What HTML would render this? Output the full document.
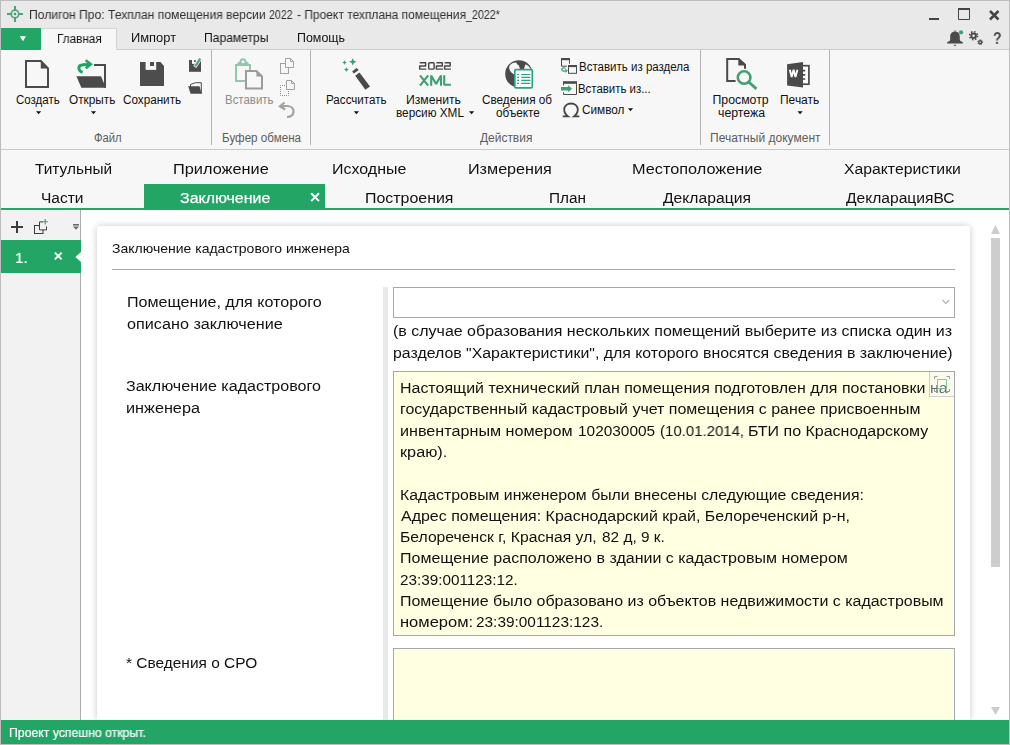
<!DOCTYPE html>
<html lang="ru"><head><meta charset="utf-8"><title>Полигон Про</title>
<style>
html,body{margin:0;padding:0}
body{width:1010px;height:745px;overflow:hidden;position:relative;background:#e8e8e8;font-family:"Liberation Sans",sans-serif;}
.t{position:absolute;white-space:pre;transform-origin:0 50%;display:block}
.a{position:absolute}
svg{position:absolute;overflow:visible}
.g{will-change:transform}

</style></head>
<body>
<!-- window frame -->
<div class="a" style="left:0;top:0;width:1010px;height:745px;background:#bdbdbd"></div>
<div class="a" style="left:1px;top:1px;width:1008px;height:743px;background:#e9e9e9"></div>
<!-- ribbon body -->
<div class="a" style="left:1px;top:50px;width:1008px;height:99px;background:#f7f7f7"></div>
<div class="a" style="left:1px;top:149px;width:1008px;height:1px;background:#c9c9c9"></div>
<div class="a" style="left:1px;top:49px;width:1008px;height:1px;background:#cbcbcb"></div>
<!-- app button -->
<div class="a" style="left:1px;top:28px;width:40px;height:22px;background:#23a566"></div>
<svg style="left:19px;top:36px" width="8" height="6" viewBox="0 0 8 6"><path d="M0.8 0.3h6.2L3.900 5.200z" fill="#fff"/></svg>
<!-- active ribbon tab -->
<div class="a" style="left:41px;top:28px;width:76px;height:22px;background:#f7f7f7;border-top:1px solid #d4d4d4;border-right:1px solid #d4d4d4;box-sizing:border-box"></div>
<!-- ribbon separators -->
<div class="a" style="left:211px;top:50px;width:1px;height:95px;background:#b4b4b4"></div>
<div class="a" style="left:310px;top:50px;width:1px;height:95px;background:#b4b4b4"></div>
<div class="a" style="left:700px;top:50px;width:1px;height:95px;background:#b4b4b4"></div>
<div class="a" style="left:829px;top:50px;width:1px;height:95px;background:#b4b4b4"></div>
<!-- section tabs area -->
<div class="a" style="left:1px;top:150px;width:1008px;height:58px;background:#f7f7f7"></div>
<div class="a" style="left:144px;top:184px;width:181px;height:24px;background:#23a566"></div>
<div class="a" style="left:1px;top:208px;width:1008px;height:2px;background:#23a566"></div>
<!-- content bg -->
<div class="a" style="left:81px;top:210px;width:928px;height:510px;background:#ffffff"></div>
<!-- sidebar -->
<div class="a" style="left:1px;top:210px;width:79px;height:510px;background:#f2f2f2"></div>
<div class="a" style="left:80px;top:210px;width:1px;height:510px;background:#adadad"></div>
<div class="a" style="left:1px;top:240px;width:80px;height:33px;background:#23a566"></div>
<svg style="left:75px;top:252px" width="6" height="10" viewBox="0 0 6 10"><path d="M6 0L0.300 5l5.700 5z" fill="#ffffff"/></svg>
<!-- card -->
<div class="a" style="left:97px;top:226px;width:873px;height:494px;background:#fff;border-radius:3px 3px 0 0;box-shadow:0 0 7px rgba(0,0,0,.22)"></div>
<div class="a" style="left:112px;top:269px;width:843px;height:1px;background:#a9a9b3"></div>
<!-- splitter -->
<div class="a" style="left:383px;top:287px;width:5px;height:433px;background:#e9e9e9"></div>
<!-- combo -->
<div class="a" style="left:393px;top:287px;width:562px;height:31px;background:#fff;border:1px solid #a6a6b0;box-sizing:border-box"></div>
<svg style="left:941px;top:299px" width="9" height="6" viewBox="0 0 9 6"><path d="M1.4 1l3.400 3.400L8.200 1" fill="none" stroke="#adadb5" stroke-width="1.100"/></svg>
<!-- textareas -->
<div class="a" style="left:393px;top:371px;width:562px;height:265px;background:#ffffe1;border:1px solid #a6a6b0;box-sizing:border-box"></div>
<div class="a" style="left:393px;top:648px;width:562px;height:80px;background:#ffffe1;border:1px solid #a6a6b0;box-sizing:border-box"></div>
<!-- scrollbar -->
<div class="a" style="left:991px;top:238px;width:9px;height:329px;background:#cdcdcd"></div>
<svg style="left:991px;top:225px" width="9" height="9" viewBox="0 0 9 9"><path d="M4.5 0L9 9H0z" fill="#cdcdcd"/></svg>
<svg style="left:991px;top:707px" width="9" height="8" viewBox="0 0 9 8"><path d="M0 0h9L4.5 8z" fill="#cdcdcd"/></svg>
<!-- status bar -->
<div class="a" style="left:1px;top:720px;width:1008px;height:24px;background:#23a566"></div>
<!-- ===== ICONS ===== -->
<svg style="left:0;top:0" width="1010" height="150" viewBox="0 0 1010 150">
<!-- logo -->
<g stroke="#4ea37b" fill="none">
 <circle cx="15" cy="14" r="3.8" stroke-width="1.7"/>
 <path d="M15 6v4.2M15 17.8v4.2M7 14h4.2M18.8 14h4.2" stroke-width="2"/>
</g>
<circle cx="15" cy="14" r="1.3" fill="#3d9a6c"/>
<!-- window controls -->
<rect x="929" y="18" width="10" height="2" fill="#444"/>
<path d="M958.5 9v10.5h11V9z" fill="none" stroke="#444" stroke-width="1"/>
<rect x="958" y="8" width="12" height="2" fill="#444"/>
<path d="M990 11l8.5 8.5M998.5 11l-8.5 8.5" stroke="#444" stroke-width="2.5" fill="none"/>
<!-- bell -->
<path d="M955 31.600c-3 0-4.800 2.200-4.800 5.200v2.600c0 1.200-.8 2-3 2.600v1.600h15.600v-1.600c-2.200-.6-3-1.400-3-2.600v-2.600c0-3-1.800-5.200-4.800-5.200z" fill="#4a4a4a"/>
<rect x="954.200" y="30.300" width="1.600" height="1.500" fill="#8a8a8a"/>
<rect x="953.900" y="44.800" width="2.200" height="1" fill="#4a4a4a"/>
<circle cx="961" cy="32.300" r="2.100" fill="#3aa46f"/>
<!-- gears -->
<g fill="none" stroke="#4a4a4a">
<circle cx="973.600" cy="35.700" r="2.300" stroke-width="2"/>
<circle cx="973.600" cy="35.700" r="4" stroke-width="1.500" stroke-dasharray="1.570 1.570"/>
<circle cx="980.200" cy="42.200" r="1.500" stroke-width="1.400"/>
<circle cx="980.200" cy="42.200" r="2.500" stroke-width=".9" stroke-dasharray=".98 .98"/>
</g>
<!-- NEW doc -->
<path d="M26 61h14.800l7.200 7.500V87H26z" fill="none" stroke="#4a4a4a" stroke-width="2"/>
<path d="M40.800 60.200v8.300H48.800z" fill="#4a4a4a"/>
<!-- OPEN folder -->
<path d="M76.400 76.200H101l4.900 11.500H81.400z" fill="#4a4a4a"/>
<path d="M94 65h11v22.700" fill="none" stroke="#4a4a4a" stroke-width="2"/>
<path d="M82.600 72.400C78 71 78.200 66.600 80.500 65.400 82.500 64.400 85 64.500 89.500 64.400" fill="none" stroke="#1fa463" stroke-width="2.900"/>
<path d="M85.700 60.300l5.100 4-5.100 4" fill="none" stroke="#1fa463" stroke-width="2.600"/>
<!-- SAVE -->
<path d="M140 62h20.500l3.500 4.100V86H140z" fill="#4d4d4d"/>
<rect x="145.600" y="61" width="10.600" height="8.900" fill="#f7f7f7"/>
<rect x="150" y="62" width="4" height="4" fill="#4d4d4d"/>
<!-- save-as small -->
<rect x="189" y="60" width="12" height="11.800" fill="#4d4d4d"/>
<rect x="192" y="59" width="5.300" height="4.900" fill="#f7f7f7"/>
<rect x="194.100" y="60.200" width="1.800" height="1.700" fill="#4d4d4d"/>
<path d="M200.600 58l-5.800 9" stroke="#f7f7f7" stroke-width="3.600"/>
<path d="M200.200 58.700l-5 7.700" stroke="#4aa57b" stroke-width="2.200"/>
<!-- small folder -->
<path d="M190.500 87V84.400L195.600 82.700H201.300V93.500" fill="#f7f7f7" stroke="#4a4a4a" stroke-width="1"/>
<path d="M188.200 86.300H199.500L201.800 93.800H190.600z" fill="#4a4a4a"/>
<!-- PASTE (disabled) -->
<rect x="236" y="65" width="14" height="16" fill="none" stroke="#93c7ae" stroke-width="2"/>
<path d="M238 65v-2.500h10V65" fill="#93c7ae" stroke="#93c7ae" stroke-width="1"/>
<circle cx="243" cy="61.800" r="2.500" fill="#f7f7f7" stroke="#93c7ae" stroke-width="2"/>
<path d="M246 71h10.400l5.600 5.500V88.600H246z" fill="#f7f7f7" stroke="#9c9c9c" stroke-width="2"/>
<path d="M256.400 70v6.500H263z" fill="#9c9c9c"/>
<!-- copy (disabled) -->
<g fill="#f7f7f7" stroke="#a2a2a2" stroke-width="1">
<rect x="280.500" y="63.500" width="8" height="10"/>
<path d="M285.500 58.500h5l3 3v6h-8z"/>
<path d="M290.500 58.500v3h3" fill="none"/>
<rect x="280.500" y="85.500" width="8" height="10" stroke-dasharray="1 1" stroke-dashoffset=".5" stroke="#8e8e8e"/>
<path d="M286.500 80.500h5l3 3v6h-8z"/>
<path d="M291.500 80.500v3h3" fill="none"/>
</g>
<!-- undo -->
<path d="M287 117c5 0 6.500-3 6.500-5.500 0-3.500-3-5.500-6.500-5.500h-5" fill="none" stroke="#a2a2a2" stroke-width="2.200"/>
<path d="M284.500 102.500l-4.500 3.800 5.200 3.200" fill="none" stroke="#a2a2a2" stroke-width="2.200"/>
<!-- WAND -->
<path d="M359.500 72.500L355.200 75.800 365.400 89.700 370 86.500z" fill="#4a4a4a"/>
<path d="M356.500 68.100L352.100 71.500 353.900 73.600 358.700 70.100z" fill="#4a4a4a"/>
<g fill="#3f9f72">
<path d="M352.80 58.00L353.95 60.65L356.60 61.80L353.95 62.95L352.80 65.60L351.65 62.95L349.00 61.80L351.65 60.65z"/><path d="M344.50 60.30L345.25 61.85L346.80 62.60L345.25 63.35L344.50 64.90L343.75 63.35L342.20 62.60L343.75 61.85z"/><path d="M346.40 67.20L347.20 68.80L348.80 69.60L347.20 70.40L346.40 72.00L345.60 70.40L344.00 69.60L345.60 68.80z"/>
</g>
<!-- 2022 XML -->
<g fill="none" stroke="#484848" stroke-width="1.450" stroke-linejoin="round">
<path d="M419.7 62.700H425.6V65.900H419.7V69.100H426.3"/><rect x="428.700" y="62.700" width="5.400" height="6.400" rx=".8"/><path d="M436.4 62.700H442.3V65.900H436.4V69.100H443.0"/><path d="M444.6 62.700H450.2V65.900H444.6V69.100H450.9"/>
</g>
<g fill="none" stroke="#3f9f72" stroke-width="2.100" stroke-linejoin="bevel">
<path d="M420 75.300l8.200 10.400M428.200 75.300l-8.200 10.400"/>
<path d="M431.200 85.700V75.600l4.900 8.400 4.900-8.400v10.100"/>
<path d="M444.200 75.300v9.400h6.700"/>
</g>
<!-- GLOBE -->
<circle cx="518.900" cy="73.900" r="13.700" fill="#4a4a4a"/>
<path transform="translate(51.6 6.9) scale(.9)" d="M516.200 61.800c.6 1.200 1 2 2 2.600 1.200.7 1.300 1.500 1.600 2.600.2.700.700 1.300.600 2.200l.1 6h-6c-1.800-1-3.600-2-4.700-3.800-.9-1.500-1.700-3.200-1.300-5 .4-1.700 2.500-3.300 4.200-4 1.200-.5 2.300-.8 3.500-.6z" fill="#f7f7f7"/>
<path d="M525.600 64.300c1.800 1 3.600 2.300 5 4.500l.5 1.500h-7.300c.3-2 .8-4 1.800-6z" fill="#f7f7f7"/>
<rect x="514.800" y="69.600" width="17.500" height="18.300" rx="1.200" fill="#fbfdfc" stroke="#2ba57c" stroke-width="1.700"/>
<g stroke="#2ba57c" stroke-width="1.200">
<path d="M517.100 74.500h2M521.200 74.500h9.200M517.100 77.400h2M521.200 77.400h9.200M517.100 80.400h2M521.200 80.400h9.200M517.100 83.300h2M521.200 83.300h9.200"/>
</g>
<!-- insert from section -->
<path d="M561.500 59v7.200h5.500M569.500 59v4.700" fill="none" stroke="#4a4a4a" stroke-width="1"/>
<rect x="561" y="58" width="9" height="2.200" fill="#4a4a4a"/>
<rect x="568.500" y="65.500" width="8" height="7.800" fill="#f7f7f7" stroke="#4a4a4a" stroke-width="1"/>
<rect x="568" y="65" width="9" height="2.100" fill="#4a4a4a"/>
<path d="M565.300 68.200c-2.300-.8-3.500 0-3.500 1.200s1.200 1.700 3 1.700h1" fill="none" stroke="#4fa47c" stroke-width="1.300"/>
<path d="M565.300 68.300l2.600 2.400-2.800 2.300z" fill="#4fa47c"/>
<!-- insert from... -->
<path d="M563.500 82v3.300M563.500 92.300v2.200H576.500V82" fill="none" stroke="#4a4a4a" stroke-width="1"/>
<rect x="563" y="81.200" width="14" height="2.600" fill="#4a4a4a"/>
<path d="M561 87.100h7.100v-1.800l3.900 3.500-3.900 3.400v-1.600H561z" fill="#3f9e72"/>
<!-- omega -->
<path d="M562.700 116.400H568C565.500 114.500 564.200 112 564.200 109.500 564.200 106 567.200 103.500 571 103.500S577.800 106 577.800 109.500C577.800 112 576.500 114.500 574 116.400H579.300" fill="none" stroke="#464646" stroke-width="1.800"/>
<!-- PREVIEW -->
<path d="M745 68.800V64.700L738.800 59H727.200V81H735.600" fill="none" stroke="#4a4a4a" stroke-width="2"/>
<path d="M738.300 58.600V65.600H745.800z" fill="#4a4a4a"/>
<circle cx="744.100" cy="77.500" r="6.300" fill="#f7f7f7" stroke="#459d72" stroke-width="2.600"/>
<path d="M748.800 82l7.600 6.900" stroke="#459d72" stroke-width="2.800"/>
<!-- WORD -->
<rect x="802" y="65.700" width="6.900" height="18.500" fill="#fbfbfb" stroke="#4a4a4a" stroke-width="1.700"/>
<path d="M803 70.700h2.200M803 74.800h2.200M803 79h2.200" stroke="#4a4a4a" stroke-width="1.700"/>
<path d="M787.100 64.200L803 62V87.600L787.100 85.500z" fill="#4a4a4a"/>
<path d="M789.800 69.800l1.900 7.200 1.900-7.200 1.900 7.200 1.900-7.200" fill="none" stroke="#fff" stroke-width="1.900" stroke-linejoin="bevel"/>
<!-- dropdown arrows -->
<g fill="#151515">
<path d="M36.0 111.2h5.2l-2.600 3z"/>
<path d="M90.9 111.2h5.2l-2.600 3z"/>
<path d="M353.8 111.2h5.2l-2.600 3z"/>
<path d="M469.0 111.2h5.2l-2.600 3z"/>
<path d="M627.9 108.2h5.2l-2.600 3z"/>
<path d="M797.5 111.2h5.2l-2.600 3z"/>
</g>
</svg>
<span class="t g" style="left:992.800px;top:29px;font-size:16px;line-height:20px;font-weight:bold;color:#4a4a4a;transform:scaleX(.88)">?</span>
<!-- tab close -->
<svg style="left:310px;top:192px" width="10" height="10" viewBox="0 0 10 10"><path d="M1.200 1.300l7.800 7.800M9 1.300L1.200 9.100" stroke="#fff" stroke-width="2" fill="none"/></svg>
<!-- sidebar icons -->
<svg style="left:0;top:210px" width="100" height="70" viewBox="0 210 100 70">
<path d="M17 221v12M11 227h12" stroke="#3c3c3c" stroke-width="2" fill="none"/>
<rect x="34.500" y="225.500" width="8.500" height="8" fill="none" stroke="#3c3c3c" stroke-width="1"/>
<path d="M43 221.900h-3.500v8h7v-3.500" fill="#f1f1f1" stroke="#3c3c3c" stroke-width="1"/>
<path d="M45.200 219v5.400M42.500 221.700h5.400" stroke="#3a9e6e" stroke-width="1.100" fill="none"/>
<rect x="73" y="224" width="6" height="1.600" fill="#6a6a6a"/>
<path d="M73 226.500h6l-3 3.300z" fill="#6a6a6a"/>
<path d="M54.800 252.600l6.800 6.800M61.600 252.600l-6.800 6.800" stroke="#fff" stroke-width="2" fill="none"/>
</svg>
<!-- textarea overlay button -->
<div class="a" style="z-index:5;left:929px;top:372px;width:25px;height:25px;background:rgba(240,244,252,.4);border-left:1px solid rgba(200,204,200,.9);border-bottom:1px solid rgba(200,204,200,.9);box-sizing:border-box"></div>
<svg style="z-index:6;opacity:.85;left:929px;top:372px" width="25" height="25" viewBox="929 372 25 25">
<path d="M934.500 379v-2.500h3M946.500 376.500h3v2.500M949.500 389v2.500h-3M937.500 391.500h-3V389" fill="none" stroke="#8d8d8d" stroke-width="1"/>
<rect x="937.500" y="379.500" width="9" height="9" fill="none" stroke="#74bd98" stroke-width="1"/>
</svg>

<span class="t g" style="left:28.50px;top:6px;font-size:12.3px;line-height:18px;color:#2e2e2e;transform:scaleX(0.9866);">Полигон Про: Техплан помещения версии</span>
<span class="t g" style="left:269.20px;top:6px;font-size:12.3px;line-height:18px;color:#2e2e2e;transform:scaleX(0.8630);">2022</span>
<span class="t g" style="left:297.10px;top:6px;font-size:12.3px;line-height:18px;color:#2e2e2e;transform:scaleX(0.9751);">- Проект техплана помещения</span>
<span class="t g" style="left:466.30px;top:6px;font-size:12.3px;line-height:18px;color:#2e2e2e;transform:scaleX(0.8694);">_2022*</span>
<span class="t g" style="left:56.50px;top:30px;font-size:12.3px;line-height:18px;color:#111111;transform:scaleX(0.9556);">Главная</span>
<span class="t g" style="left:131.00px;top:29px;font-size:12.3px;line-height:18px;color:#111111;transform:scaleX(1.0476);">Импорт</span>
<span class="t g" style="left:204.00px;top:29px;font-size:12.3px;line-height:18px;color:#111111;transform:scaleX(0.9844);">Параметры</span>
<span class="t g" style="left:297.49px;top:29px;font-size:12.3px;line-height:18px;color:#111111;transform:scaleX(1.0110);">Помощь</span>
<span class="t" style="left:16.00px;top:91px;font-size:12.3px;line-height:18px;color:#111111;transform:scaleX(0.9353);">Создать</span>
<span class="t" style="left:69.00px;top:91px;font-size:12.3px;line-height:18px;color:#111111;transform:scaleX(0.9583);">Открыть</span>
<span class="t" style="left:123.00px;top:91px;font-size:12.3px;line-height:18px;color:#111111;transform:scaleX(0.9508);">Сохранить</span>
<span class="t" style="left:93.50px;top:129px;font-size:12.3px;line-height:18px;color:#5c5c5c;transform:scaleX(0.9147);">Файл</span>
<span class="t" style="left:224.51px;top:91px;font-size:12.3px;line-height:18px;color:#8c8c8c;transform:scaleX(0.9315);">Вставить</span>
<span class="t" style="left:221.51px;top:129px;font-size:12.3px;line-height:18px;color:#5c5c5c;transform:scaleX(0.9458);">Буфер обмена</span>
<span class="t" style="left:325.51px;top:91px;font-size:12.3px;line-height:18px;color:#111111;transform:scaleX(0.9445);">Рассчитать</span>
<span class="t" style="left:406.49px;top:91px;font-size:12.3px;line-height:18px;color:#111111;transform:scaleX(0.9908);">Изменить</span>
<span class="t" style="left:396.00px;top:104px;font-size:12.3px;line-height:18px;color:#111111;transform:scaleX(0.9571);">версию XML</span>
<span class="t" style="left:482.00px;top:91px;font-size:12.3px;line-height:18px;color:#111111;transform:scaleX(0.9521);">Сведения об</span>
<span class="t" style="left:495.50px;top:104px;font-size:12.3px;line-height:18px;color:#111111;transform:scaleX(0.9565);">объекте</span>
<span class="t" style="left:480.00px;top:129px;font-size:12.3px;line-height:18px;color:#5c5c5c;transform:scaleX(0.9718);">Действия</span>
<span class="t" style="left:578.50px;top:58px;font-size:12.3px;line-height:18px;color:#111111;transform:scaleX(0.9359);">Вставить из раздела</span>
<span class="t" style="left:578.49px;top:80px;font-size:12.3px;line-height:18px;color:#111111;transform:scaleX(0.9287);">Вставить из...</span>
<span class="t" style="left:582.00px;top:101px;font-size:12.3px;line-height:18px;color:#111111;transform:scaleX(0.9570);">Символ</span>
<span class="t" style="left:712.50px;top:91px;font-size:12.3px;line-height:18px;color:#111111;transform:scaleX(1.0000);">Просмотр</span>
<span class="t" style="left:718.00px;top:104px;font-size:12.3px;line-height:18px;color:#111111;transform:scaleX(1.0000);">чертежа</span>
<span class="t" style="left:779.50px;top:91px;font-size:12.3px;line-height:18px;color:#111111;transform:scaleX(0.9744);">Печать</span>
<span class="t" style="left:709.50px;top:129px;font-size:12.3px;line-height:18px;color:#5c5c5c;transform:scaleX(0.9777);">Печатный документ</span>
<span class="t g" style="left:35.00px;top:158px;font-size:15.3px;line-height:21px;color:#111111;transform:scaleX(1.0066);">Титульный</span>
<span class="t g" style="left:173.40px;top:158px;font-size:15.3px;line-height:21px;color:#111111;transform:scaleX(1.0671);">Приложение</span>
<span class="t g" style="left:331.70px;top:158px;font-size:15.3px;line-height:21px;color:#111111;transform:scaleX(1.0444);">Исходные</span>
<span class="t g" style="left:467.50px;top:158px;font-size:15.3px;line-height:21px;color:#111111;transform:scaleX(1.0565);">Измерения</span>
<span class="t g" style="left:631.50px;top:158px;font-size:15.3px;line-height:21px;color:#111111;transform:scaleX(1.0636);">Местоположение</span>
<span class="t g" style="left:844.40px;top:158px;font-size:15.3px;line-height:21px;color:#111111;transform:scaleX(1.0301);">Характеристики</span>
<span class="t g" style="left:41.42px;top:187px;font-size:15.3px;line-height:21px;color:#111111;transform:scaleX(1.0153);">Части</span>
<span class="t g" style="left:179.50px;top:187px;font-size:15.3px;line-height:21px;color:#ffffff;transform:scaleX(1.0424);-webkit-text-stroke:.25px #fff;">Заключение</span>
<span class="t g" style="left:364.70px;top:187px;font-size:15.3px;line-height:21px;color:#111111;transform:scaleX(1.0410);">Построения</span>
<span class="t g" style="left:549.01px;top:187px;font-size:15.3px;line-height:21px;color:#111111;transform:scaleX(1.0031);">План</span>
<span class="t g" style="left:663.00px;top:187px;font-size:15.3px;line-height:21px;color:#111111;transform:scaleX(1.0247);">Декларация</span>
<span class="t g" style="left:845.80px;top:187px;font-size:15.3px;line-height:21px;color:#111111;transform:scaleX(1.0198);">ДекларацияВС</span>
<span class="t g" style="left:15.00px;top:247px;font-size:15.4px;line-height:21px;color:#ffffff;transform:scaleX(1.0000);-webkit-text-stroke:.2px #fff;">1.</span>
<span class="t g" style="left:111.50px;top:239px;font-size:13.3px;line-height:19px;color:#111111;transform:scaleX(1.0533);">Заключение кадастрового инженера</span>
<span class="t g" style="left:126.50px;top:291px;font-size:15.1px;line-height:21px;color:#111111;transform:scaleX(1.0663);">Помещение, для которого</span>
<span class="t g" style="left:126.80px;top:313px;font-size:15.1px;line-height:21px;color:#111111;transform:scaleX(1.0731);">описано заключение</span>
<span class="t g" style="left:126.00px;top:375px;font-size:15.1px;line-height:21px;color:#111111;transform:scaleX(1.0632);">Заключение кадастрового</span>
<span class="t g" style="left:125.80px;top:397px;font-size:15.1px;line-height:21px;color:#111111;transform:scaleX(1.0751);">инженера</span>
<span class="t g" style="left:126.00px;top:652px;font-size:15.1px;line-height:21px;color:#111111;transform:scaleX(1.0236);">* Сведения о СРО</span>
<span class="t g" style="left:392.70px;top:320px;font-size:15.1px;line-height:21px;color:#111111;transform:scaleX(1.0590);">(в случае образования нескольких помещений выберите из списка один из</span>
<span class="t g" style="left:392.70px;top:342px;font-size:15.1px;line-height:21px;color:#111111;transform:scaleX(1.0510);">разделов "Характеристики", для которого вносятся сведения в заключение)</span>
<span class="t g" style="left:400.00px;top:377px;font-size:15.1px;line-height:21px;color:#111111;transform:scaleX(1.0571);">Настоящий технический план помещения подготовлен для постановки на</span>
<span class="t g" style="left:400.00px;top:398px;font-size:15.1px;line-height:21px;color:#111111;transform:scaleX(1.0572);">государственный кадастровый учет помещения с ранее присвоенным</span>
<span class="t g" style="left:400.00px;top:420px;font-size:15.1px;line-height:21px;color:#111111;transform:scaleX(1.0706);">инвентарным номером</span>
<span class="t g" style="left:577.79px;top:420px;font-size:15.1px;line-height:21px;color:#111111;transform:scaleX(1.0203);">102030005</span>
<span class="t g" style="left:659.50px;top:420px;font-size:15.1px;line-height:21px;color:#111111;transform:scaleX(0.9916);">(10.01.2014,</span>
<span class="t g" style="left:748.20px;top:420px;font-size:15.1px;line-height:21px;color:#111111;transform:scaleX(1.0592);">БТИ по Краснодарскому</span>
<span class="t g" style="left:400.01px;top:441px;font-size:15.1px;line-height:21px;color:#111111;transform:scaleX(1.0763);">краю).</span>
<span class="t g" style="left:400.00px;top:484px;font-size:15.1px;line-height:21px;color:#111111;transform:scaleX(1.0478);">Кадастровым инженером были внесены следующие сведения:</span>
<span class="t g" style="left:401.00px;top:505px;font-size:15.1px;line-height:21px;color:#111111;transform:scaleX(1.0577);">Адрес помещения: Краснодарский край, Белореченский р-н,</span>
<span class="t g" style="left:400.10px;top:526px;font-size:15.1px;line-height:21px;color:#111111;transform:scaleX(1.0412);">Белореченск г, Красная ул,</span>
<span class="t g" style="left:602.40px;top:526px;font-size:15.1px;line-height:21px;color:#111111;transform:scaleX(1.0201);">82 д, 9 к.</span>
<span class="t g" style="left:400.00px;top:547px;font-size:15.1px;line-height:21px;color:#111111;transform:scaleX(1.0607);">Помещение расположено в здании с кадастровым номером</span>
<span class="t g" style="left:400.00px;top:569px;font-size:15.1px;line-height:21px;color:#111111;transform:scaleX(1.0123);">23:39:001123:12.</span>
<span class="t g" style="left:400.00px;top:590px;font-size:15.1px;line-height:21px;color:#111111;transform:scaleX(1.0578);">Помещение было образовано из объектов недвижимости с кадастровым</span>
<span class="t g" style="left:399.59px;top:611px;font-size:15.1px;line-height:21px;color:#111111;transform:scaleX(1.0939);">номером:</span>
<span class="t g" style="left:475.70px;top:611px;font-size:15.1px;line-height:21px;color:#111111;transform:scaleX(1.0195);">23:39:001123:123.</span>
<span class="t g" style="left:8.80px;top:724px;font-size:12.3px;line-height:18px;color:#ffffff;transform:scaleX(0.9956);-webkit-text-stroke:.2px #fff;">Проект успешно открыт.</span>
</body></html>
